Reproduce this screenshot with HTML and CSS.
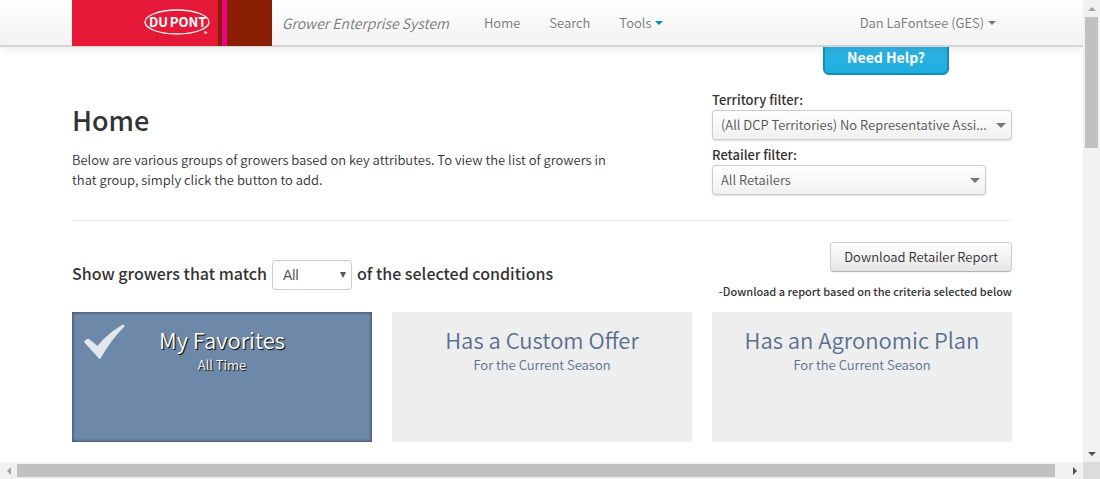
FILE: index.html
```html
<!DOCTYPE html>
<html lang="en">
<head>
<meta charset="utf-8">
<title>Grower Enterprise System</title>
<link rel="stylesheet" href="styles.css">
</head>
<body>
<div class="window">
  <div class="page">
    <header class="navbar">
      <a class="brand" href="#" aria-label="DuPont">
        <svg class="brand-logo" width="68" height="28" viewBox="0 0 68 28" role="img" aria-label="DuPont">
          <ellipse cx="33" cy="14" rx="32" ry="12" fill="none" stroke="#fff" stroke-width="1.300"/>
          <text class="logo-text" x="14.500" y="19" text-anchor="middle">DU</text>
          <text class="logo-text" x="44" y="19" text-anchor="middle">PONT</text>
          <circle cx="61.500" cy="24.500" r="1.600" fill="#fff" fill-opacity=".7"/>
        </svg>
        <span class="stripe"></span>
      </a>
      <span class="product">Grower Enterprise System</span>
      <nav class="menu">
        <a href="#">Home</a>
        <a href="#">Search</a>
        <a href="#" class="dropdown dropdown-blue">Tools</a>
      </nav>
      <a href="#" class="dropdown user">Dan LaFontsee (GES)</a>
    </header>
    <main class="content">
      <div class="help-row"><button class="help" type="button">Need Help?</button></div>
      <section class="columns intro">
        <div class="lead">
          <h1>Home</h1>
          <p>Below are various groups of growers based on key attributes. To view the list of growers in<br>that group, simply click the button to add.</p>
        </div>
        <div class="filters">
          <label for="territory">Territory filter:</label>
          <span class="picker"><select id="territory"><option>(All DCP Territories) No Representative Assi...</option></select></span>
          <label for="retailer">Retailer filter:</label>
          <span class="picker picker-short"><select id="retailer"><option>All Retailers</option></select></span>
        </div>
      </section>
      <section class="conditions">
        <div class="match">
          <label for="match">Show growers that match</label>
          <span class="match-picker"><select id="match"><option>All</option><option>Any</option></select></span>
          <span>of the selected conditions</span>
        </div>
        <div class="report">
          <button class="download" type="button">Download Retailer Report</button>
          <p>-Download a report based on the criteria selected below</p>
        </div>
      </section>
      <section class="cards">
        <button class="card card-active" type="button">
          <svg class="check" width="42" height="36" viewBox="0 0 42 36" aria-hidden="true"><path d="M1 18C3 15 5 14 6 15C9 17 12 20 14.500 22C22 13 30 6 40 .5C41 0 42 2 41 3C32 12 24 23 17.500 34.500C17 35.500 16 35 15.500 34Z" fill="#e2e7ed"/></svg>
          <span class="card-title">My Favorites</span><span>All Time</span>
        </button>
        <button class="card" type="button"><span class="card-title">Has a Custom Offer</span><span>For the Current Season</span></button>
        <button class="card" type="button"><span class="card-title">Has an Agronomic Plan</span><span>For the Current Season</span></button>
      </section>
    </main>
  </div>
  <div class="scroll scroll-v" aria-hidden="true"><i class="arrow up"></i><i class="thumb"></i><i class="rest"></i><i class="arrow down"></i></div>
  <div class="scroll scroll-h" aria-hidden="true"><i class="arrow left"></i><i class="thumb"></i><i class="rest"></i><i class="arrow right"></i></div>
  <div class="corner"></div>
</div>
</body>
</html>
```
FILE: styles.css
```css
* { box-sizing: border-box; }
body { margin: 0; background: #fff; color: #333; }
body, button, select { font-family: "Noto Sans CJK KR", "Open Sans", sans-serif; font-size: 13px; font-weight: 300; line-height: 20px; }
body, button, select { font-weight: 350; }
a { color: inherit; text-decoration: none; }
h1, p { margin: 0; }
button, select { cursor: pointer; }

.window { display: grid; grid-template-columns: 1fr 17px; grid-template-rows: 1fr 17px; height: 100vh; }
.page { overflow: hidden; min-width: 0; min-height: 0; }

/* Navigation bar */
.navbar { position: relative; z-index: 2; display: flex; height: 47px; padding: 0 71px 0 72px; color: #777; background: linear-gradient(#fff, #f2f2f2); border-bottom: 2px solid #d4d4d4; box-shadow: 0 1px 10px rgba(0, 0, 0, .1); line-height: 46px; text-shadow: 0 1px 0 #fff; }
.brand { display: flex; width: 200px; height: 46px; background: #8a1f03; }
.brand-logo { flex: none; width: 146px; height: 46px; padding: 8px 6px 10px 72px; background: #e51937; }
.logo-text { font: bold 13px "Noto Sans CJK KR", sans-serif; fill: #fff; text-shadow: none; }
.stripe { width: 5px; margin-left: 4px; background: #ec008c; }
.product { margin-left: 10px; font-size: 14px; font-style: italic; }
.menu { display: flex; gap: 29px; margin-left: 35px; }
.dropdown::after { content: ""; display: inline-block; margin-left: 4px; vertical-align: 3px; border: 4px solid transparent; border-top-color: #777; border-bottom: 0; }
.dropdown-blue::after { border-top-color: #08c; }
.user { margin: 0 16px 0 auto; }

.content { padding: 0 71px 0 72px; }
.help-row { display: flex; justify-content: flex-end; margin-top: -8px; padding-right: 63px; }
.help { width: 126px; height: 36px; color: #fff; background: linear-gradient(#32b4e2, #1eaee0); border: 2px solid #178db5; border-radius: 6px; font-size: 14px; font-weight: bold; padding: 0; }

/* Page introduction and filters */
.columns { display: grid; grid-template-columns: 1fr 300px; column-gap: 20px; }
.intro { padding: 15px 0 25px; border-bottom: 1px solid #eee; }
.lead { padding-top: 10px; }
h1 { margin-bottom: 10px; font-size: 27px; line-height: 40px; font-weight: 500; }
.filters label { display: block; font-weight: 500; }
.picker { position: relative; display: block; margin-bottom: 5px; }
.picker:last-child { margin-bottom: 0; }
.picker-short { width: 274px; }
select { appearance: none; display: block; width: 100%; height: 30px; color: #555; border: 1px solid #ccc; border-radius: 3px; }
.picker select { padding: 0 18px 0 8px; background: linear-gradient(#fff, #f0f0f0); box-shadow: 0 1px 2px rgba(0, 0, 0, .12); text-overflow: ellipsis; overflow: hidden; white-space: nowrap; }
.picker::after { content: ""; position: absolute; right: 6px; top: 13px; border: 5px solid transparent; border-top: 5px solid #777; border-bottom: 0; pointer-events: none; }

/* Match conditions */
.conditions { display: flex; justify-content: space-between; padding: 21px 0 10px; }
.match { display: flex; align-items: center; gap: 5px; height: 30px; margin-top: 18px; font-size: 16px; font-weight: 500; }
.match > :first-child, .match > :last-child { padding-bottom: 4px; }
.match-picker { position: relative; width: 80px; }
.match-picker select { padding: 0 10px; background: #fff; font-family: "Liberation Sans", sans-serif; font-size: 14px; }
.match-picker::after { content: ""; position: absolute; right: 6px; top: 12px; border: 3px solid transparent; border-top: 6px solid #555; border-bottom: 0; pointer-events: none; }
.report { display: flex; flex-direction: column; align-items: flex-end; gap: 9px; padding-bottom: 1px; }
.report p { font-size: 11px; font-weight: 500; }
.download { height: 30px; padding: 0 13px; color: #333; background: linear-gradient(#fff, #e6e6e6); border: 1px solid #ccc; border-bottom-color: #b3b3b3; border-radius: 4px; box-shadow: 0 1px 2px rgba(0, 0, 0, .05); }

.cards { display: grid; grid-template-columns: repeat(3, 1fr); gap: 20px; }
.card { position: relative; display: flex; flex-direction: column; align-items: center; height: 130px; padding: 12px 0 0; color: #576f92; background: #eee; border: 0; }
.card-title { margin-bottom: 1px; font-size: 22px; line-height: 30px; }
.card-active { color: #fff; background: #6d88a8; box-shadow: inset 0 0 3px 1px #46536a; text-shadow: 1px 1px 1px #000; }
.check { position: absolute; left: 11px; top: 12px; }

/* Window scrollbars */
.scroll { display: flex; background: #f1f1f1; }
.scroll-v { flex-direction: column; padding: 0 2px; }
.scroll-h { padding: 2px 0; }
.arrow { display: grid; place-items: center; flex: 0 0 17px; }
.arrow::before { content: ""; border: 4px solid transparent; }
.up::before { border-top: 0; border-bottom-color: #a3a3a3; }
.down::before { border-bottom: 0; border-top-color: #505050; }
.left::before { border-left: 0; border-right-color: #a3a3a3; }
.right::before { border-right: 0; border-left-color: #505050; }
.thumb { background: #c1c1c1; }
.scroll-v .thumb { flex: 131; }
.scroll-v .rest { flex: 297; }
.scroll-h .thumb { flex: 1038; }
.scroll-h .rest { flex: 11; }
.corner { background: #dcdcdc; }
```
